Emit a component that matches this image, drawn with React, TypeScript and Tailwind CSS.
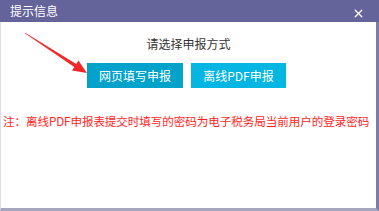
import { X } from 'lucide-react'

const font = { fontFamily: '"Noto Sans CJK SC", "Noto Sans", sans-serif' }

/** Little red pointer drawn over the dialog, aimed at the first button. */
function PointerArrow() {
  return (
    <svg
      className="pointer-events-none absolute left-0 top-0"
      width="379"
      height="211"
      viewBox="0 0 379 211"
      aria-hidden
    >
      <polygon
        points="24.8,33.3 25.2,32.7 76.2,63.9 78.4,60.4 87,73 72,70.4 74.3,66.9"
        fill="#f02828"
      />
    </svg>
  )
}

export default function App() {
  return (
    <div className="relative flex h-[211px] w-[379px] flex-col bg-white" style={font}>
      <header className="flex h-[22px] shrink-0 items-center justify-between bg-[#64649a] pl-[10px] pr-[14px]">
        <span className="text-[12px] leading-none text-white">提示信息</span>
        <X className="mt-[4px] h-[13px] w-[13px] text-white" strokeWidth={2.5} />
      </header>

      <div className="flex flex-1 flex-col items-center border-b-[3px] border-l border-r-[3px] border-b-[#a6a6be] border-l-[#dcdcee] border-r-[#7c7caa]">
        <p className="mt-[14px] text-[12px] leading-[16px] text-[#333333]">请选择申报方式</p>

        <div className="mt-[11px] flex gap-[8px] pr-[4px]">
          <button
            type="button"
            className="h-[25px] w-[96px] bg-[#02a2cb] text-[12px] text-white"
          >
            网页填写申报
          </button>
          <button
            type="button"
            className="h-[25px] w-[95px] bg-[#05b5e2] text-[12px] text-white"
          >
            离线PDF申报
          </button>
        </div>

        <p className="mt-[25px] self-start whitespace-nowrap pl-[2px] text-[11.6px] leading-[16px] tracking-[-0.1px] text-[#ff1e1e]">
          注：离线PDF申报表提交时填写的密码为电子税务局当前用户的登录密码
        </p>
      </div>

      <PointerArrow />
    </div>
  )
}
